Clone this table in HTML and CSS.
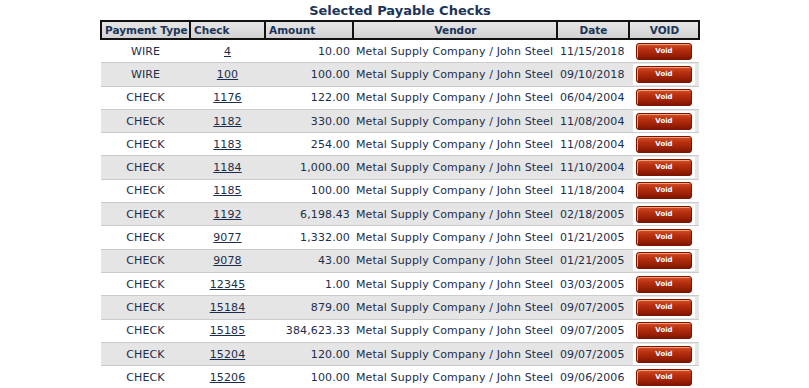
FILE: index.html
```html
<!DOCTYPE html>
<html>
<head>
<meta charset="utf-8">
<link rel="stylesheet" href="styles.css">
</head>
<body>
<div class="page">
  <h1 class="title">Selected Payable Checks</h1>
  <table class="checks">
    <colgroup>
      <col class="c-type"><col class="c-check"><col class="c-amount"><col class="c-vendor"><col class="c-date"><col class="c-void">
    </colgroup>
    <thead>
      <tr>
        <th class="left">Payment Type</th>
        <th class="left">Check</th>
        <th class="left">Amount</th>
        <th>Vendor</th>
        <th>Date</th>
        <th>VOID</th>
      </tr>
    </thead>
    <tbody>
      <tr><td class="center">WIRE</td><td class="center"><a href="#">4</a></td><td class="right">10.00</td><td>Metal Supply Company / John Steel</td><td>11/15/2018</td><td class="center"><span class="halo"><span class="void">Void</span></span></td></tr>
      <tr class="alt"><td class="center">WIRE</td><td class="center"><a href="#">100</a></td><td class="right">100.00</td><td>Metal Supply Company / John Steel</td><td>09/10/2018</td><td class="center"><span class="halo"><span class="void">Void</span></span></td></tr>
      <tr><td class="center">CHECK</td><td class="center"><a href="#">1176</a></td><td class="right">122.00</td><td>Metal Supply Company / John Steel</td><td>06/04/2004</td><td class="center"><span class="halo"><span class="void">Void</span></span></td></tr>
      <tr class="alt"><td class="center">CHECK</td><td class="center"><a href="#">1182</a></td><td class="right">330.00</td><td>Metal Supply Company / John Steel</td><td>11/08/2004</td><td class="center"><span class="halo"><span class="void">Void</span></span></td></tr>
      <tr><td class="center">CHECK</td><td class="center"><a href="#">1183</a></td><td class="right">254.00</td><td>Metal Supply Company / John Steel</td><td>11/08/2004</td><td class="center"><span class="halo"><span class="void">Void</span></span></td></tr>
      <tr class="alt"><td class="center">CHECK</td><td class="center"><a href="#">1184</a></td><td class="right">1,000.00</td><td>Metal Supply Company / John Steel</td><td>11/10/2004</td><td class="center"><span class="halo"><span class="void">Void</span></span></td></tr>
      <tr><td class="center">CHECK</td><td class="center"><a href="#">1185</a></td><td class="right">100.00</td><td>Metal Supply Company / John Steel</td><td>11/18/2004</td><td class="center"><span class="halo"><span class="void">Void</span></span></td></tr>
      <tr class="alt"><td class="center">CHECK</td><td class="center"><a href="#">1192</a></td><td class="right">6,198.43</td><td>Metal Supply Company / John Steel</td><td>02/18/2005</td><td class="center"><span class="halo"><span class="void">Void</span></span></td></tr>
      <tr><td class="center">CHECK</td><td class="center"><a href="#">9077</a></td><td class="right">1,332.00</td><td>Metal Supply Company / John Steel</td><td>01/21/2005</td><td class="center"><span class="halo"><span class="void">Void</span></span></td></tr>
      <tr class="alt"><td class="center">CHECK</td><td class="center"><a href="#">9078</a></td><td class="right">43.00</td><td>Metal Supply Company / John Steel</td><td>01/21/2005</td><td class="center"><span class="halo"><span class="void">Void</span></span></td></tr>
      <tr><td class="center">CHECK</td><td class="center"><a href="#">12345</a></td><td class="right">1.00</td><td>Metal Supply Company / John Steel</td><td>03/03/2005</td><td class="center"><span class="halo"><span class="void">Void</span></span></td></tr>
      <tr class="alt"><td class="center">CHECK</td><td class="center"><a href="#">15184</a></td><td class="right">879.00</td><td>Metal Supply Company / John Steel</td><td>09/07/2005</td><td class="center"><span class="halo"><span class="void">Void</span></span></td></tr>
      <tr><td class="center">CHECK</td><td class="center"><a href="#">15185</a></td><td class="right">384,623.33</td><td>Metal Supply Company / John Steel</td><td>09/07/2005</td><td class="center"><span class="halo"><span class="void">Void</span></span></td></tr>
      <tr class="alt"><td class="center">CHECK</td><td class="center"><a href="#">15204</a></td><td class="right">120.00</td><td>Metal Supply Company / John Steel</td><td>09/07/2005</td><td class="center"><span class="halo"><span class="void">Void</span></span></td></tr>
      <tr><td class="center">CHECK</td><td class="center"><a href="#">15206</a></td><td class="right">100.00</td><td>Metal Supply Company / John Steel</td><td>09/06/2006</td><td class="center"><span class="halo"><span class="void">Void</span></span></td></tr>
    </tbody>
  </table>
</div>
</body>
</html>
```

FILE: styles.css
```css
html, body {
  margin: 0;
  padding: 0;
  background: #ffffff;
}
body {
  font-family: "DejaVu Sans", Verdana, sans-serif;
  font-size: 11px;
  color: #1c2e4c;
}
.page {
  width: 800px;
}
.title {
  margin: 0;
  height: 20px;
  line-height: 22px;
  text-align: center;
  font-size: 13px;
  font-weight: bold;
  color: #1b3558;
}
.checks {
  width: 598px;
  margin: 0 auto;
  border-collapse: collapse;
  table-layout: fixed;
}
.c-type { width: 89px; }
.c-check { width: 75px; }
.c-amount { width: 88px; }
.c-vendor { width: 204px; }
.c-date { width: 72px; }
.c-void { width: 70px; }
.checks th {
  height: 16px;
  padding: 0 2px 0 3px;
  border: 2px solid #111;
  background: linear-gradient(#e6e6e6, #d2d2d2);
  font-weight: bold;
  font-size: 10.5px;
  color: #1b3558;
  text-align: center;
  white-space: nowrap;
  overflow: hidden;
}
.checks th.left { text-align: left; }
.checks td {
  height: 22.3px;
  padding: 0 3px;
  border-bottom: 1px solid #cbcbcb;
  white-space: nowrap;
  vertical-align: middle;
  letter-spacing: 0.12px;
}
.checks tr.alt td {
  background: #e5e5e5;
}
.center { text-align: center; }
.right { text-align: right; }
.checks a {
  color: #1c2e4c;
  text-decoration: underline;
}
.halo {
  display: inline-block;
  background: #ffffff;
  padding: 2px 3px;
  vertical-align: middle;
  letter-spacing: 0;
}
.void {
  display: block;
  width: 54px;
  height: 15px;
  line-height: 15px;
  border: 1px solid #7d1400;
  border-radius: 3px;
  background: linear-gradient(#d4502a 0%, #b8300f 35%, #9a2006 75%, #7c1500 100%);
  box-shadow: inset 1px 1px 0 #f0a070;
  color: #ffffff;
  font-family: Verdana, "DejaVu Sans", sans-serif;
  font-size: 7px;
  font-weight: bold;
  text-align: center;
}
```
